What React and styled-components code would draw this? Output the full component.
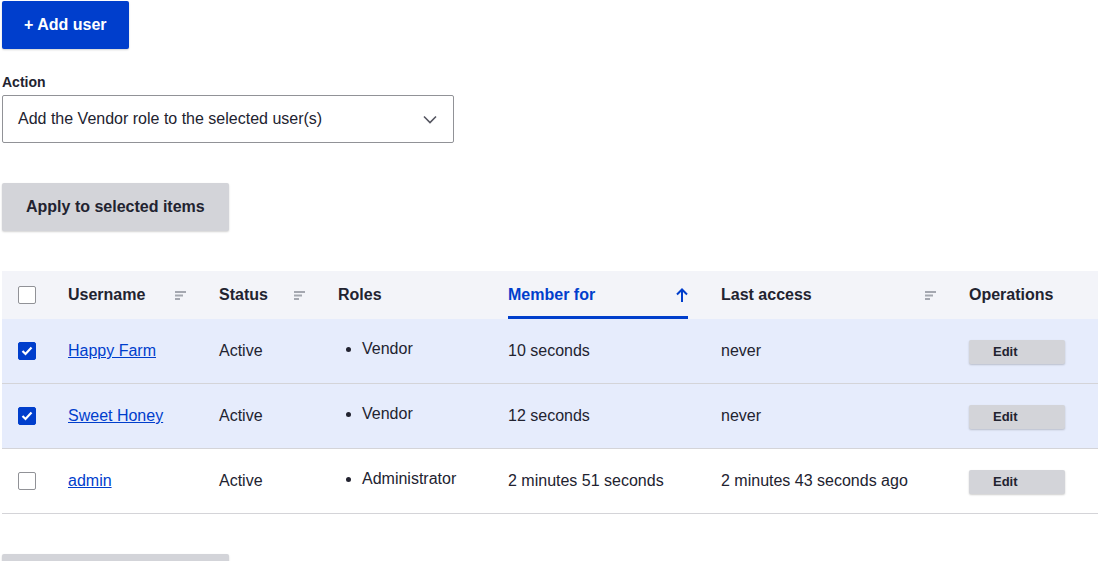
import React from 'react';
import styled, { createGlobalStyle } from 'styled-components';

const GlobalStyle = createGlobalStyle`
  body {
    margin: 0;
    background: #fff;
    font-family: "Liberation Sans", Arial, sans-serif;
    color: #222330;
  }
`

//Styled Components
const Page = styled.div`
  padding: 1px 0 0 2px;
  display: flex;
  flex-direction: column;
  align-items: flex-start;
`
const Button = styled.button`
  height: 48px;
  padding: 0 ${props => props.$pad || 24}px;
  border: 0;
  border-radius: 2px;
  font-family: inherit;
  font-size: 16px;
  font-weight: 700;
  color: ${props => props.$primary ? '#fff' : '#222330'};
  background: ${props => props.$primary ? '#003ecc' : '#d3d4d9'};
  box-shadow: 0 1px 2px rgba(0, 0, 0, 0.18);
  cursor: pointer;
`
const Field = styled.div`
  margin-top: 24px;
  display: flex;
  flex-direction: column;
  gap: 4px;
`
const Label = styled.label`
  font-size: 14px;
  font-weight: 700;
  line-height: 18px;
`
const Select = styled.div`
  box-sizing: border-box;
  width: 452px;
  height: 48px;
  padding: 0 16px 0 15px;
  display: flex;
  align-items: center;
  justify-content: space-between;
  border: 1px solid #919297;
  border-radius: 2px;
  font-size: 16px;
`
const Spaced = styled.div`
  margin-top: 40px;
`
const Table = styled.table`
  margin-top: 40px;
  width: 1096px;
  border-collapse: collapse;
  table-layout: fixed;
  font-size: 16px;
`
const Th = styled.th`
  height: 48px;
  padding: 0 17px 0 16px;
  background: #f3f4f9;
  text-align: left;
  font-weight: 700;
  color: ${props => props.$active ? '#003ecc' : '#222330'};
  vertical-align: middle;
`
const SortLink = styled.div`
  box-sizing: border-box;
  height: 48px;
  display: flex;
  align-items: center;
  justify-content: space-between;
  border-bottom: 3px solid ${props => props.$active ? '#003ecc' : 'transparent'};
  padding-top: 3px;
`
const Tr = styled.tr`
  background: ${props => props.$selected ? '#e6ecfc' : '#fff'};
  border-bottom: 1px solid #d4d4d8;
`
const Td = styled.td`
  height: 64px;
  padding: 0 16px;
  vertical-align: middle;
`
const UserLink = styled.a`
  color: #003ecc;
  text-decoration: underline;
`
const RoleList = styled.ul`
  margin: -4px 0 0;
  padding-left: 24px;
`
const Check = styled.span`
  box-sizing: border-box;
  width: 18px;
  height: 18px;
  display: flex;
  align-items: center;
  justify-content: center;
  border-radius: 2px;
  border: 1px solid ${props => props.$checked ? '#003ecc' : '#919297'};
  background: ${props => props.$checked ? '#003ecc' : '#fff'};
`
const EditButton = styled.button`
  box-sizing: border-box;
  display: block;
  margin-top: 1px;
  width: 96px;
  height: 24px;
  padding: 0 0 0 24px;
  text-align: left;
  border: 0;
  border-radius: 2px;
  background: #d3d4d9;
  box-shadow: 0 1px 2px rgba(0, 0, 0, 0.2);
  font-family: inherit;
  font-size: 13px;
  font-weight: 700;
  color: #222330;
`

const SortIcon = () => (
  <svg width="12" height="9" viewBox="0 0 12 9" style={{ marginRight: -1 }}>
    <rect x="0" y="0" width="11" height="2" fill="#a4a7b0" />
    <rect x="0" y="3.5" width="8" height="2" fill="#a4a7b0" />
    <rect x="0" y="7" width="5" height="2" fill="#a4a7b0" />
  </svg>
)

const ArrowUp = () => (
  <svg width="12" height="15" viewBox="0 0 12 15">
    <path d="M6 14V2M1 6.5L6 1.5l5 5" stroke="#003ecc" strokeWidth="2" fill="none" />
  </svg>
)

const Checkbox = ({ checked }) => (
  <Check $checked={checked}>
    {checked && (
      <svg width="12" height="10" viewBox="0 0 12 10">
        <path d="M1.5 5l3 3 6-6.5" stroke="#fff" strokeWidth="2.2" fill="none" />
      </svg>
    )}
  </Check>
)

const users = [
  { name: 'Happy Farm', role: 'Vendor', member: '10 seconds', access: 'never', selected: true },
  { name: 'Sweet Honey', role: 'Vendor', member: '12 seconds', access: 'never', selected: true },
  { name: 'admin', role: 'Administrator', member: '2 minutes 51 seconds', access: '2 minutes 43 seconds ago', selected: false },
]

const App = () => {
  return (
    <Page>
      <GlobalStyle />
      <Button $primary $pad={22}>+ Add user</Button>

      <Field>
        <Label>Action</Label>
        <Select>
          <span>Add the Vendor role to the selected user(s)</span>
          <svg width="14" height="9" viewBox="0 0 14 9">
            <path d="M1 1.5l6 6 6-6" stroke="#545560" strokeWidth="1.6" fill="none" />
          </svg>
        </Select>
      </Field>

      <Spaced>
        <Button>Apply to selected items</Button>
      </Spaced>

      <Table>
        <colgroup>
          <col style={{ width: 50 }} />
          <col style={{ width: 151 }} />
          <col style={{ width: 119 }} />
          <col style={{ width: 170 }} />
          <col style={{ width: 213 }} />
          <col style={{ width: 248 }} />
          <col style={{ width: 145 }} />
        </colgroup>
        <thead>
          <tr>
            <Th><Checkbox /></Th>
            <Th><SortLink>Username <SortIcon /></SortLink></Th>
            <Th><SortLink>Status <SortIcon /></SortLink></Th>
            <Th>Roles</Th>
            <Th $active><SortLink $active>Member for <ArrowUp /></SortLink></Th>
            <Th><SortLink>Last access <SortIcon /></SortLink></Th>
            <Th>Operations</Th>
          </tr>
        </thead>
        <tbody>
          {users.map(user => (
            <Tr key={user.name} $selected={user.selected}>
              <Td><Checkbox checked={user.selected} /></Td>
              <Td><UserLink href="#">{user.name}</UserLink></Td>
              <Td>Active</Td>
              <Td>
                <RoleList><li>{user.role}</li></RoleList>
              </Td>
              <Td>{user.member}</Td>
              <Td>{user.access}</Td>
              <Td><EditButton>Edit</EditButton></Td>
            </Tr>
          ))}
        </tbody>
      </Table>

      <Spaced>
        <Button>Apply to selected items</Button>
      </Spaced>
    </Page>
  )
}

export default App;
